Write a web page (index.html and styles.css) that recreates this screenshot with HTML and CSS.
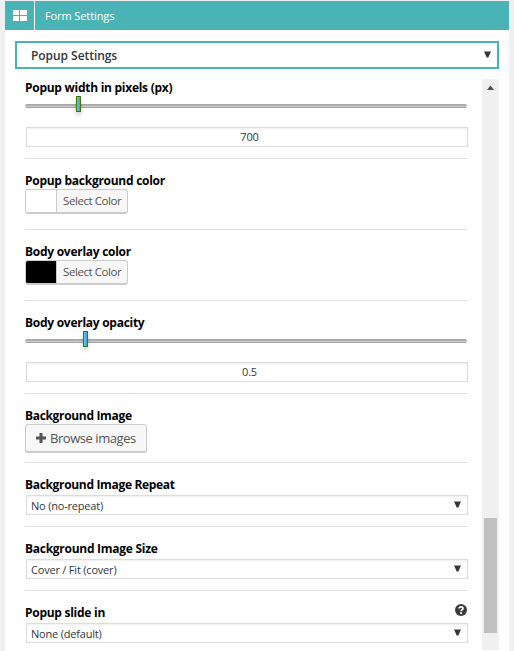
FILE: index.html
```
<!DOCTYPE html>
<html lang="en">
<head>
<meta charset="utf-8">
<title>Form Settings</title>
<link rel="stylesheet" href="styles.css">
</head>
<body>
<main class="panel">
  <header class="bar">
    <div class="bar-icon"><svg width="14" height="12" viewBox="0 0 14 12" fill="#fff"><path d="M0 0h6v5H0zM7 0h7v5H7zM0 6h6v5H0zM7 6h7v5H7z"/></svg></div>
    <h1 class="bar-title"><span>Form Settings</span></h1>
  </header>
  <div class="picker"><span>Popup Settings</span><svg class="arrow" width="7" height="7" viewBox="0 0 7 7"><path d="M0 0.5h7L4.3 6.5H2.7z"/></svg></div>
  <div class="body">
    <div class="fields">
      <section class="field first">
        <label class="label"><span>Popup width in pixels (px)</span></label>
        <div class="slider"><i class="knob k1"></i></div>
        <div class="input">700</div>
      </section>
      <section class="field color">
        <label class="label"><span>Popup background color</span></label>
        <div class="color-btn"><i class="swatch"></i><span class="color-text">Select Color</span></div>
      </section>
      <section class="field color">
        <label class="label"><span>Body overlay color</span></label>
        <div class="color-btn"><i class="swatch black"></i><span class="color-text">Select Color</span></div>
      </section>
      <section class="field">
        <label class="label"><span>Body overlay opacity</span></label>
        <div class="slider"><i class="knob k2"></i></div>
        <div class="input">0.5</div>
      </section>
      <section class="field browse">
        <label class="label tight"><span>Background Image</span></label>
        <div class="browse-btn"><svg width="10" height="10" viewBox="0 0 10 10" fill="#555"><path d="M3.5 0h3v3.5H10v3H6.5V10h-3V6.5H0v-3h3.5z"/></svg><span>Browse images</span></div>
      </section>
      <section class="field">
        <label class="label tight"><span>Background Image Repeat</span></label>
        <div class="select"><span>No (no-repeat)</span><svg class="arrow" width="7" height="7" viewBox="0 0 7 7"><path d="M0 0.5h7L4.3 6.5H2.7z"/></svg></div>
      </section>
      <section class="field">
        <label class="label"><span>Background Image Size</span></label>
        <div class="select"><span>Cover / Fit (cover)</span><svg class="arrow" width="7" height="7" viewBox="0 0 7 7"><path d="M0 0.5h7L4.3 6.5H2.7z"/></svg></div>
      </section>
      <section class="field last">
        <label class="label"><span>Popup slide in</span><svg class="help" width="12" height="12" viewBox="0 0 12 12"><circle cx="6" cy="6" r="6" fill="#3c3c3c"/><path d="M4 4.5C4.2 2.3 8 2.3 8 4.4C8 5.7 6.1 5.7 6.1 7.2" fill="none" stroke="#fff" stroke-width="1.7"/><path d="M5.2 8.2h1.8v1.7H5.2z" fill="#fff"/></svg></label>
        <div class="select"><span>None (default)</span><svg class="arrow" width="7" height="7" viewBox="0 0 7 7"><path d="M0 0.5h7L4.3 6.5H2.7z"/></svg></div>
      </section>
    </div>
    <div class="scrollbar"><svg class="up" width="7" height="4" viewBox="0 0 7 4"><path d="M0 4L3 0h1l3 4z" fill="#505050"/></svg><i class="thumb"></i></div>
  </div>
</main>
</body>
</html>
```
FILE: styles.css
```
* { box-sizing: border-box; }
body { margin: 0; height: 651px; overflow: hidden; background: #f0f0f0; font: 11px/18px "Open Sans", "Noto Sans", sans-serif; color: #32373c; padding: 1px 5px 0; }
span { white-space: nowrap; }
svg { display: block; flex: none; }
.panel { width: 504px; height: 650px; background: #fff; }
.bar { display: flex; height: 29px; background: #49b3b6; color: #fff; }
.bar-icon { width: 30px; border-right: 1px solid #fff; padding: 9px 0 0 8px; }
.bar-title { margin: 0; padding-left: 10px; font-size: 11px; font-weight: 400; line-height: 30px; letter-spacing: -.1px; }
.picker { display: flex; justify-content: space-between; align-items: center; margin: 11px 10px 0; height: 28px; border: 2px solid #49b3b6; padding: 2px 6px 0 14px; font-size: 12px; font-weight: 600; letter-spacing: -.05px; box-shadow: inset 0 1px 2px rgba(0,0,0,.07); }
.arrow { fill: #32373c; }
.picker .arrow { margin-top: -4px; }
.body { display: flex; justify-content: space-between; margin: 9px 10px 0 20px; height: 572px; overflow: hidden; }
.fields { width: 443px; }
.field { width: 442px; padding: 12px 0 11px; border-bottom: 1px solid #dfdfdf; }
.field.first { padding-top: 0; }
.field.color { padding-bottom: 15px; }
.field.browse { padding-bottom: 9px; }
.field.last { border: 0; }
.label { display: flex; justify-content: space-between; height: 18px; font-size: 12px; font-weight: 700; line-height: 20px; letter-spacing: -.27px; color: #000; }
.label.tight { letter-spacing: -.33px; }
.help { margin-top: 1px; }
.slider { height: 4px; margin: 8px 0 19px; border-radius: 2px; background: linear-gradient(#a5a8a7 0 25%, #b3b3b3 25% 50%, #cacaca 50% 75%, #a4a4a4 75%); }
.knob { display: block; position: relative; top: -8px; width: 5px; height: 16px; border: 1px solid #4b7209; background: linear-gradient(90deg, #6bc2e5, #38a6d5); box-shadow: 0 3px 4px rgba(0,0,0,.2); }
.k1 { left: 51px; }
.k2 { left: 58px; }
.input, .select { width: 442px; height: 20px; margin-left: 1px; border: 1px solid #ddd; background: #fff; box-shadow: inset 0 1px 2px rgba(0,0,0,.07); letter-spacing: -.2px; }
.input { text-align: center; padding-left: 5px; line-height: 18px; }
.select { display: flex; justify-content: space-between; align-items: center; margin-top: 2px; padding: 1px 6px 0 4px; }
.select .arrow { margin-top: -2px; }
.color-btn { display: flex; width: 103px; height: 25px; border: 1px solid #ccc; border-bottom-width: 2px; border-radius: 3px; overflow: hidden; background: #f7f7f7; color: #555; }
.swatch { flex: none; width: 31px; background: #fff; border-right: 1px solid #ccc; }
.black { background: #000; }
.color-text { padding-left: 6px; font-size: 11.5px; line-height: 22px; letter-spacing: -.42px; }
.browse-btn { display: flex; align-items: center; gap: 4px; width: 122px; height: 29px; padding: 0 0 1px 10px; border: 1px solid #ccc; border-bottom-width: 2px; border-radius: 3px; background: #f7f7f7; color: #555; font-size: 13px; letter-spacing: -.45px; }
.scrollbar { width: 17px; height: 572px; margin-top: 1px; background: #f0f0f0; display: flex; flex-direction: column; align-items: center; padding-top: 7px; }
.thumb { width: 13px; height: 115px; margin-top: 428px; background: #c1c1c1; flex: none; }
```
